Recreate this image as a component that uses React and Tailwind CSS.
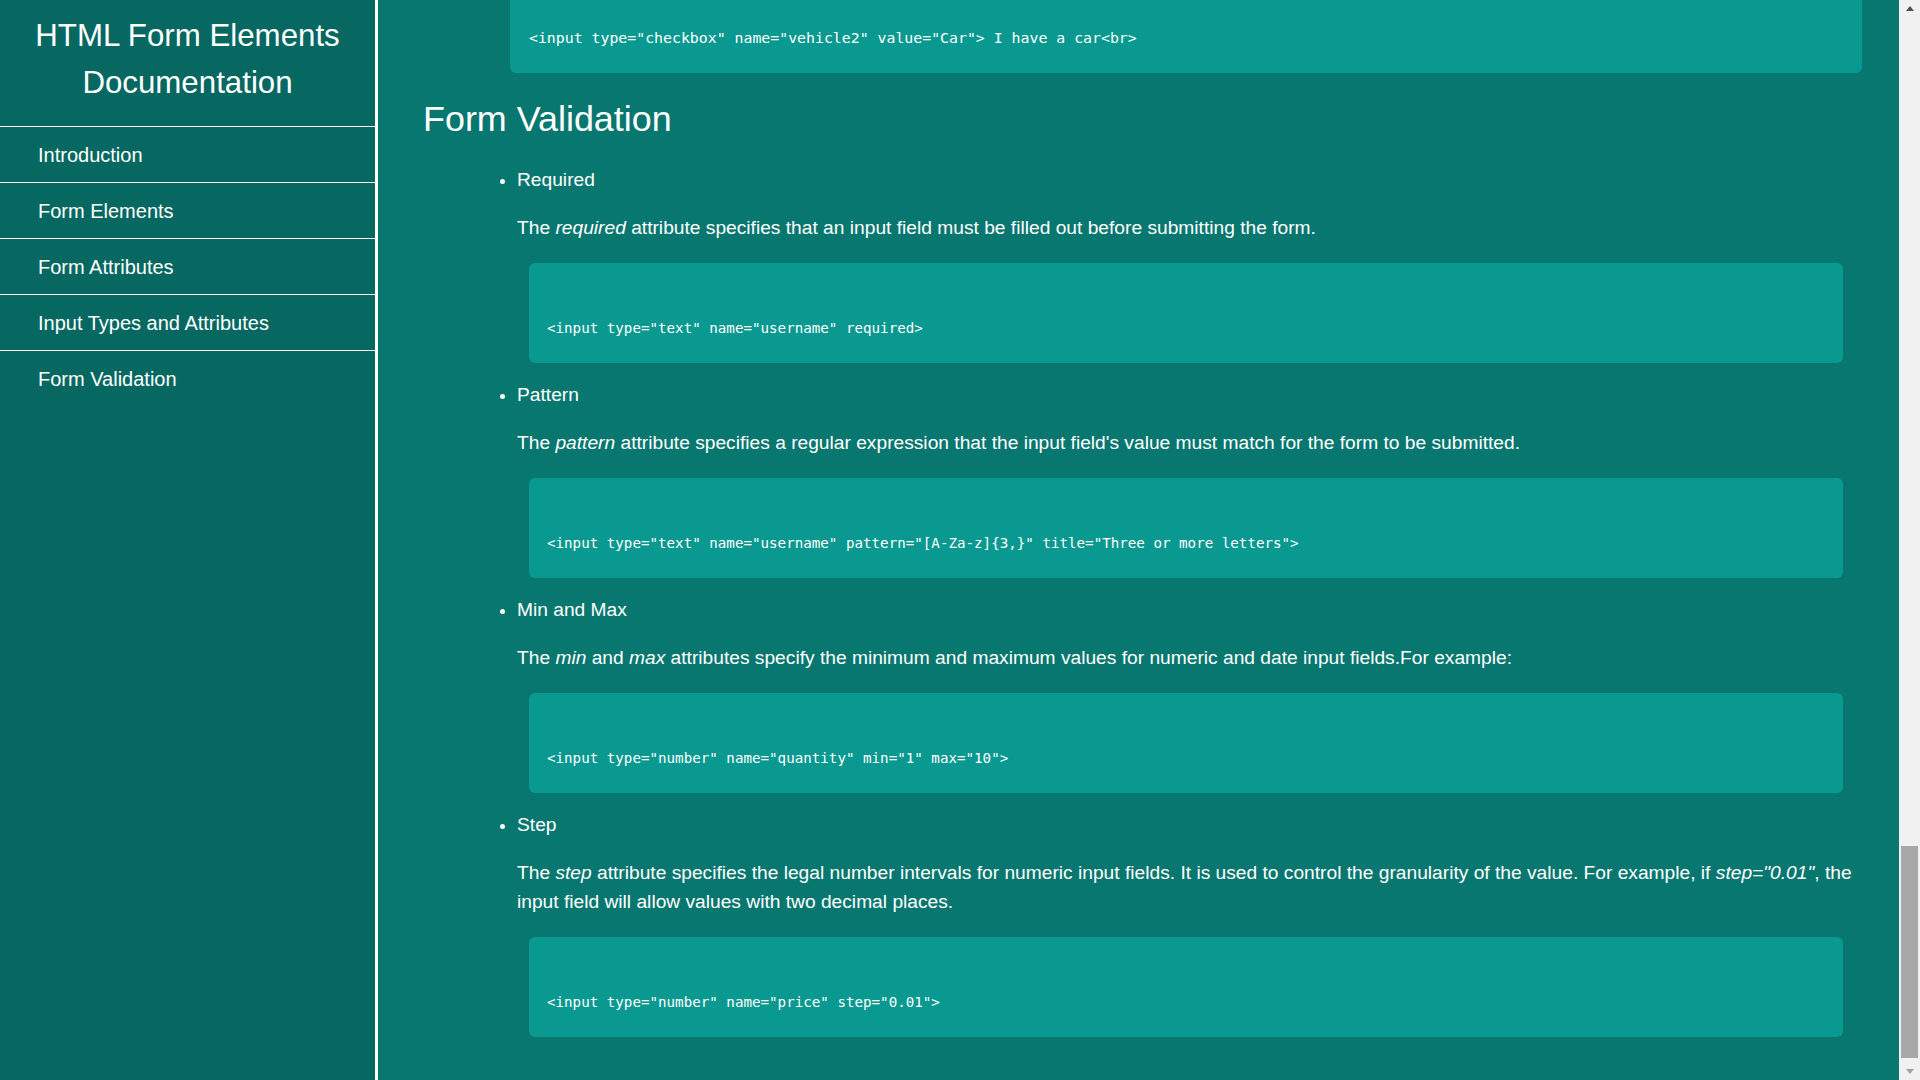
import React from "react";

const sans = { fontFamily: '"Liberation Sans", Arial, sans-serif' };
const mono = { fontFamily: '"DejaVu Sans Mono", "Liberation Mono", monospace' };

function Code({ children }) {
  return (
    <div
      className="bg-[#0a9990] rounded-[6px] h-[100px] pt-[55px] pl-[18px] ml-[12px] mr-[19px] text-white text-[14.2px] leading-[20px] whitespace-pre"
      style={mono}
    >
      {children}
    </div>
  );
}

function Item({ label, children, code, first }) {
  return (
    <li className={first ? "mt-[25px]" : "mt-[17.5px]"}>
      <div className="h-[29px] leading-[29px]">{label}</div>
      <p className="mt-[19px] leading-[29px]">{children}</p>
      <div className="mt-[20.5px]">
        <Code>{code}</Code>
      </div>
    </li>
  );
}

export default function App() {
  const nav = [
    "Introduction",
    "Form Elements",
    "Form Attributes",
    "Input Types and Attributes",
    "Form Validation",
  ];
  return (
    <div className="flex w-full h-screen overflow-hidden text-white" style={sans}>
      <aside className="w-[378px] shrink-0 bg-[#066861] border-r-[3px] border-white">
        <h1 className="text-center text-[31.25px] leading-[47px] pt-[12px] pb-[20px] font-normal">
          HTML Form Elements
          <br />
          Documentation
        </h1>
        <nav>
          {nav.map((n) => (
            <div
              key={n}
              className="h-[56px] border-t border-white pl-[38px] pt-[1px] flex items-center text-[20px]"
            >
              {n}
            </div>
          ))}
        </nav>
      </aside>
      <main className="flex-1 bg-[#08776f] pl-[45px] pr-[37px] text-[19.2px]">
        <div className="ml-[87px]">
          <div
            className="bg-[#0a9990] rounded-b-[6px] h-[73px] pt-[28px] pl-[19px] text-white text-[14.85px] leading-[20px] whitespace-pre"
            style={mono}
          >
            {'<input type="checkbox" name="vehicle2" value="Car"> I have a car<br>'}
          </div>
        </div>
        <h2 className="mt-[26px] text-[35.9px] leading-[41px] font-normal">Form Validation</h2>
        <ul className="list-disc pl-[94px] marker:text-[18px]">
          <Item
            first
            label="Required"
            code={'<input type="text" name="username" required>'}
          >
            The <em>required</em> attribute specifies that an input field must be filled out
            before submitting the form.
          </Item>
          <Item
            label="Pattern"
            code={
              '<input type="text" name="username" pattern="[A-Za-z]{3,}" title="Three or more letters">'
            }
          >
            The <em>pattern</em> attribute specifies a regular expression that the input
            field's value must match for the form to be submitted.
          </Item>
          <Item
            label="Min and Max"
            code={'<input type="number" name="quantity" min="1" max="10">'}
          >
            The <em>min</em> and <em>max</em> attributes specify the minimum and maximum values
            for numeric and date input fields.For example:
          </Item>
          <Item label="Step" code={'<input type="number" name="price" step="0.01">'}>
            The <em>step</em> attribute specifies the legal number intervals for numeric input
            fields. It is used to control the granularity of the value. For example, if{" "}
            <em>step="0.01"</em>, the input field will allow values with two decimal places.
          </Item>
        </ul>
      </main>
      <div className="w-[21px] shrink-0 bg-[#f1f1f1] flex flex-col items-center">
        <div className="h-[17px] w-full flex items-center justify-center pl-[1px]">
          <div className="w-0 h-0 border-l-[4px] border-r-[4px] border-b-[5px] border-l-transparent border-r-transparent border-b-[#505050]" />
        </div>
        <div className="flex-1 w-full relative">
          <div className="absolute left-[2px] right-[2px] top-[829px] bottom-[5px] bg-[#a8a8a8]" />
        </div>
        <div className="h-[17px] w-full flex items-center justify-center pl-[1px]">
          <div className="w-0 h-0 border-l-[4px] border-r-[4px] border-t-[5px] border-l-transparent border-r-transparent border-t-[#a3a3a3]" />
        </div>
      </div>
    </div>
  );
}
